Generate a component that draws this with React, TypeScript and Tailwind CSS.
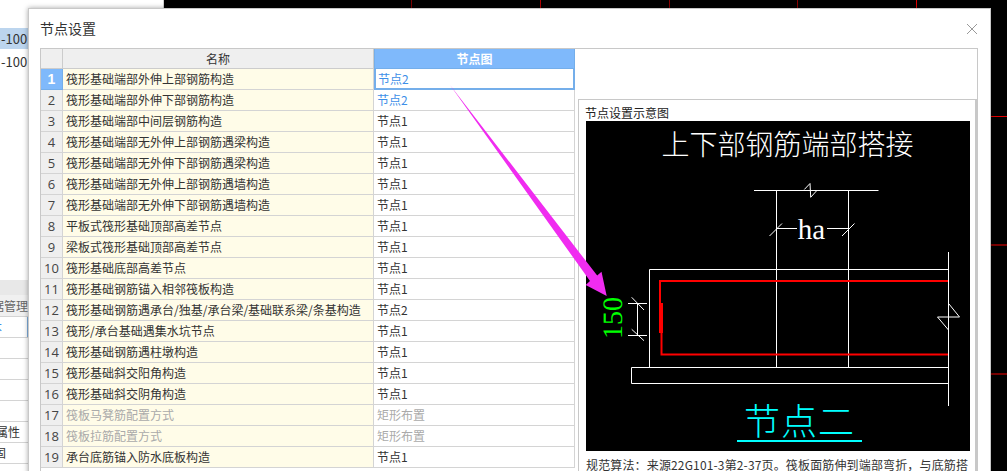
const rows = [
  { name: '筏形基础端部外伸上部钢筋构造', value: '节点2', blue: true },
  { name: '筏形基础端部外伸下部钢筋构造', value: '节点2', blue: true },
  { name: '筏形基础端部中间层钢筋构造', value: '节点1' },
  { name: '筏形基础端部无外伸上部钢筋遇梁构造', value: '节点1' },
  { name: '筏形基础端部无外伸下部钢筋遇梁构造', value: '节点1' },
  { name: '筏形基础端部无外伸上部钢筋遇墙构造', value: '节点1' },
  { name: '筏形基础端部无外伸下部钢筋遇墙构造', value: '节点1' },
  { name: '平板式筏形基础顶部高差节点', value: '节点1' },
  { name: '梁板式筏形基础顶部高差节点', value: '节点1' },
  { name: '筏形基础底部高差节点', value: '节点1' },
  { name: '筏形基础钢筋锚入相邻筏板构造', value: '节点1' },
  { name: '筏形基础钢筋遇承台/独基/承台梁/基础联系梁/条基构造', value: '节点2' },
  { name: '筏形/承台基础遇集水坑节点', value: '节点1' },
  { name: '筏形基础钢筋遇柱墩构造', value: '节点1' },
  { name: '筏形基础斜交阳角构造', value: '节点1' },
  { name: '筏形基础斜交阴角构造', value: '节点1' },
  { name: '筏板马凳筋配置方式', value: '矩形布置', muted: true },
  { name: '筏板拉筋配置方式', value: '矩形布置', muted: true },
  { name: '承台底筋锚入防水底板构造', value: '节点1' },
]

function LeftPanel() {
  return (
    <div className="flex h-full w-[164px] shrink-0 flex-col overflow-hidden border-r border-[#d0d0d0] bg-white text-[13px] text-[#333]">
      <div className="h-[28px] shrink-0" />
      <div className="h-[21px] shrink-0 bg-[#bcd5ee] pl-[1px] leading-[21px]">-100</div>
      <div className="mt-[2px] h-[22px] shrink-0 pl-[1px] leading-[22px]">-100</div>
      <div className="flex-1" />
      <div className="h-[15px] shrink-0 bg-[#e8e8e8]" />
      <div className="h-[22px] shrink-0 border-b border-[#d4d4d4] bg-[#f0f0f0] pl-[2px] text-[12px] leading-[21px] text-[#666]">
        <span className="ml-[-10px]">据管理</span>
      </div>
      <div className="h-[21px] shrink-0 border-b border-[#d4d4d4] text-[12px] leading-[20px] text-[#3d8fe8]">
        <div className="h-full w-[28px] border-r border-[#7fb0e0]">
          <span className="ml-[-10px]">本</span>
        </div>
      </div>
      <div className="h-[21px] shrink-0 border-b border-[#d4d4d4]" />
      <div className="h-[21px] shrink-0 border-b border-[#d4d4d4]" />
      <div className="h-[21px] shrink-0 border-b border-[#d4d4d4]" />
      <div className="h-[21px] shrink-0 border-b border-[#d4d4d4]" />
      <div className="h-[21px] shrink-0 overflow-hidden border-b border-[#d4d4d4] text-[12px] leading-[20px]">
        <span className="ml-[-4px]">属性</span>
      </div>
      <div className="h-[21px] shrink-0 overflow-hidden border-b border-[#d4d4d4] text-[12px] leading-[20px]">
        <span className="ml-[-6px]">固</span>
      </div>
      <div className="h-[7px] shrink-0" />
    </div>
  )
}

function CadBackground() {
  return (
    <div className="h-full flex-1 bg-black pl-[4px]">
      <svg className="block h-full w-full bg-black" viewBox="168 0 839 471" shapeRendering="crispEdges" aria-hidden>
        <path d="M411.5 0V8" stroke="#7a0000" />
        <path d="M540.5 0V8" stroke="#b00000" />
        <path d="M669.5 0V8" stroke="#8a0000" />
        <path d="M797.5 0V8" stroke="#8a0000" />
        <path d="M916.5 0V8" stroke="#e00000" />
        <path d="M991 116.5H1007" stroke="#e00000" />
        <path d="M991 245H1007" stroke="#7a0000" strokeWidth="2" />
        <path d="M991 374H1007" stroke="#7a0000" strokeWidth="2" />
      </svg>
    </div>
  )
}

function NodeDiagram() {
  return (
    <svg className="block h-[330px] w-[384px] bg-black" viewBox="586 121 384 330" aria-label="节点示意图">
      <text x="787.5" y="155" textAnchor="middle" className="fill-white font-['Noto_Sans_CJK_SC',sans-serif] text-[28px] font-light">
        上下部钢筋端部搭接
      </text>

      <g stroke="#fff" fill="none" strokeWidth="1">
        <path d="M754 190.5H878.5" />
        <path d="M804.3 189.5L810 183.5L810.7 197.3L816.7 190.7" />
        <path d="M776.5 190V367M848.5 190V367" />
        <path d="M776.5 228.5H797M827 228.5H848.5" />
        <path d="M769.5 236L782 223.5M842 236L854.5 223.5" />
        <path d="M649.5 367V269.5H948.5" />
        <path d="M631.5 367.5H948.5M631.5 367.5V383.5H948.5" />
        <path d="M948.5 252V406" />
        <path d="M949 304L959.5 317H937.5L948.5 330" />
        <path d="M637.5 303.5V335.5M628 303.5H647M628 335.5H647" />
        <path d="M631.7 297.3L644 310M631.7 329.3L644 340.7" />
      </g>

      <g stroke="#ff0000" fill="none" strokeWidth="2">
        <path d="M948 281H660V304" />
        <path d="M661.5 333V354.5H948" />
        <path d="M661 303V333" strokeWidth="4" />
      </g>

      <text x="811.5" y="239" textAnchor="middle" textRendering="geometricPrecision" className="fill-white font-['Liberation_Serif',serif] text-[29px]">
        ha
      </text>
      <text
        x="0"
        y="0"
        textAnchor="middle"
        textRendering="geometricPrecision"
        transform="translate(622 318) rotate(-90)"
        className="fill-[#00ff00] font-['Liberation_Serif',serif] text-[28px]"
      >
        150
      </text>
      <text x="799.5" y="435" textAnchor="middle" className="fill-[#00ffff] font-['Noto_Sans_CJK_SC',sans-serif] text-[36px] font-light tracking-[1px]">
        节点二
      </text>
      <rect x="737" y="440" width="125" height="2" fill="#00ffff" />
    </svg>
  )
}

function NodeTable() {
  return (
    <div className="w-[534px] shrink-0 text-[12px] text-[#333]">
      <div className="grid h-[20px] grid-cols-[22px_311px_201px] leading-[19px]">
        <div className="border-r border-b border-[#ccc] bg-[#efefef]" />
        <div className="border-r border-b border-[#ccc] bg-[#efefef] text-center">名称</div>
        <div className="border border-t-0 border-[#74aeea] bg-[#7fb9fb] text-center font-bold text-white">节点图</div>
      </div>
      {rows.map((row, i) => (
        <div className="grid h-[21px] grid-cols-[22px_311px_201px] leading-[20px]" key={row.name}>
          <div
            className={
              i === 0
                ? "border-r border-b border-[#74aeea] bg-[#7fb9fb] text-center font-['Liberation_Sans',sans-serif] text-[14px] font-bold text-white"
                : "border-r border-b border-[#d4d4d4] bg-[#efefef] text-center font-['Open_Sans',sans-serif] text-[13px] text-[#444]"
            }
          >
            {i + 1}
          </div>
          <div className={`truncate border-r border-b border-[#d4d4d4] bg-[#fffce8] pl-[3px] ${row.muted ? 'text-[#aaa]' : ''}`}>{row.name}</div>
          <div
            className={
              i === 0
                ? 'border-2 border-t-0 border-[#74aeea] bg-white pl-[2px] leading-[19px] text-[#3d8fe8]'
                : `border-r border-b border-[#d4d4d4] bg-white pl-[3px] ${row.blue ? 'text-[#3d8fe8]' : row.muted ? 'text-[#aaa]' : ''}`
            }
          >
            {row.value}
          </div>
        </div>
      ))}
    </div>
  )
}

export default function App() {
  return (
    <div className="relative flex h-[471px] w-[1007px] overflow-hidden bg-black font-['Noto_Sans_CJK_SC',sans-serif]">
      <LeftPanel />
      <CadBackground />

      <div className="absolute top-[8px] left-[28px] flex h-[480px] w-[963px] flex-col border border-[#c8c8c8] bg-white pr-[12px] pl-[11px] shadow-[0_0_5px_rgba(0,0,0,0.35)]">
        <div className="flex h-[39px] shrink-0 items-center justify-between">
          <span className="text-[14px] text-[#333]">节点设置</span>
          <svg className="size-[12px]" viewBox="0 0 12 12" stroke="#999" strokeWidth="1" fill="none" aria-label="关闭">
            <path d="M1 1L11 11M11 1L1 11" />
          </svg>
        </div>

        <div className="flex flex-1 border-t border-r border-l border-[#c8c8c8]">
          <NodeTable />
          <div className="flex-1 pt-[50px] pl-[3px]">
            <div className="h-full border-t border-r-2 border-l border-[#c8c8c8] pl-[7px] text-[12px]">
              <div className="ml-[-1px] h-[21px] leading-[25px] text-[#222]">节点设置示意图</div>
              <NodeDiagram />
              <p className="mt-[6px] w-[385px] leading-[16px] tracking-[0.15px] text-[#333]">规范算法：来源22G101-3第2-37页。筏板面筋伸到端部弯折，与底筋搭接</p>
            </div>
          </div>
        </div>
      </div>

      {/* arrow drawn over the screenshot */}
      <svg className="pointer-events-none absolute inset-0 h-[471px] w-[1007px]" viewBox="0 0 1007 471" aria-hidden>
        <polygon points="450,85 597.2,275.6 601.5,271.7 606.7,296 585.7,285 590,281" fill="#f02cf0" />
      </svg>
    </div>
  )
}
